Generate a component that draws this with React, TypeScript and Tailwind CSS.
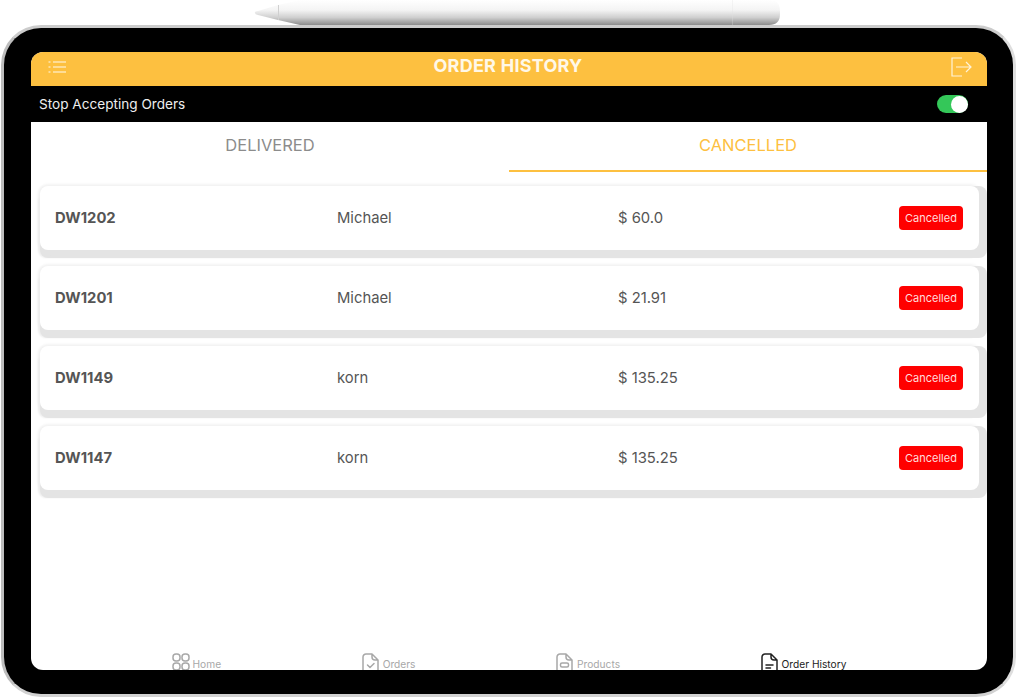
import { FC, ReactNode } from "react";

const orders = [
  { id: "DW1202", name: "Michael", total: "$ 60.0" },
  { id: "DW1201", name: "Michael", total: "$ 21.91" },
  { id: "DW1149", name: "korn", total: "$ 135.25" },
  { id: "DW1147", name: "korn", total: "$ 135.25" },
];

const Pencil: FC = () => (
  <svg width="526" height="25" viewBox="0 0 526 25" className="block ml-[254px]">
    <defs>
      <linearGradient id="pencilBody" x1="0" y1="0" x2="0" y2="1">
        <stop offset="0" stopColor="#ffffff" />
        <stop offset="0.4" stopColor="#f4f4f4" />
        <stop offset="0.7" stopColor="#cfcfcf" />
        <stop offset="1" stopColor="#8c8c8c" />
      </linearGradient>
    </defs>
    <path d="M1 13 Q0 11.5 4 11 L24 5 L46 0 L515 0 Q526 0 526 11 L526 14 Q526 25 515 25 L46 25 L24 20 L4 15 Q1 14.5 1 13 Z" fill="url(#pencilBody)" />
    <path d="M24.5 5 L24.5 20" stroke="#d0d0d0" strokeWidth="1" />
    <path d="M478.5 0 L478.5 25" stroke="#e2e2e2" strokeWidth="1" opacity="0.3" />
  </svg>
);

const TabItem: FC<{ label: string; active?: boolean; children: ReactNode }> = ({ label, active, children }) => (
  <div className={`flex items-start gap-[3px] ${active ? "text-[#222222]" : "text-[#a8a8a8]"}`}>
    <svg width="18" height="22" viewBox="0 0 18 22" fill="none" stroke="currentColor" strokeWidth="1.5" strokeLinecap="round" strokeLinejoin="round">
      {children}
    </svg>
    <span className="text-[10.2px] leading-[12px] mt-[5px]">{label}</span>
  </div>
);

const filePath = "M4 1h6l6 6v11a3 3 0 0 1-3 3H4a3 3 0 0 1-3-3V4a3 3 0 0 1 3-3z M10 1v3a3 3 0 0 0 3 3h3";

export default function App() {
  return (
    <div className="w-[1018px] h-[698px] bg-white overflow-hidden font-['Inter',sans-serif]">
      <Pencil />
      <div className="ml-[1px] w-[1015px] h-[672px] rounded-[40px] border-[3px] border-t-[#cccccc] border-l-[#bdbdbd] border-r-[#dedede] border-b-[#d2d2d2] bg-black pl-[27px] pr-[26px] py-[24px]">
        <div className="flex flex-col h-full bg-white rounded-[12px] overflow-hidden">
          <div className="relative flex items-center justify-between h-[34px] shrink-0 bg-[#fdc040] pl-[17px] pr-[15px]">
            <svg width="18" height="14" viewBox="0 0 18 14" stroke="#fff" strokeWidth="1.2" fill="none" opacity="0.9" className="-mt-[4px]">
              <path d="M0.5 2h2M5 2h13M0.5 7h2M5 7h13M0.5 12h2M5 12h13" />
            </svg>
            <span className="text-[18px] tracking-[0.25px] font-bold text-[#fff8e8] -mt-[7px]">ORDER HISTORY</span>
            <svg width="22" height="20" viewBox="0 0 22 20" stroke="#fff" strokeWidth="1.2" fill="none" opacity="0.8" className="-mt-[4px]">
              <path d="M12 1H2v18h10M6 10h15M16 5l5 5-5 5" />
            </svg>
          </div>

          <div className="flex items-center justify-between h-[36px] shrink-0 bg-black pl-[8px] pr-[19px]">
            <span className="text-[13.6px] text-[#eeeeee]">Stop Accepting Orders</span>
            <div className="flex items-center justify-end w-[31px] h-[18px] rounded-full bg-[#34c759] pr-[0.5px]">
              <div className="w-[17px] h-[17px] rounded-full bg-white" />
            </div>
          </div>

          <div className="flex h-[50px] shrink-0 text-[16.5px]">
            <div className="flex flex-1 items-center justify-center pb-[4px] text-[#8c8c8c]">DELIVERED</div>
            <div className="flex flex-1 items-center justify-center pb-[2px] text-[#fdc040] border-b-2 border-[#fdc040]">CANCELLED</div>
          </div>

          {/* Order rows */}
          <div className="flex-1 pt-[14px] pl-[9px] pr-[8px] flex flex-col gap-[16px]">
            {orders.map((order) => (
              <div
                key={order.id}
                className="grid grid-cols-[282px_281px_1fr_auto] items-center h-[64px] rounded-[8px] bg-white pl-[15px] pr-[16px] text-[14.8px] text-[#555555] shadow-[8px_8px_0_#e4e4e4,8px_0_0_#e4e4e4,0_8px_0_#e4e4e4,-2px_8px_2px_#eeeeee,-2px_0_3px_#f0f0f0,0_-2px_3px_#f4f4f4]"
              >
                <span className="font-bold">{order.id}</span>
                <span>{order.name}</span>
                <span>{order.total}</span>
                <span className="flex items-center justify-center w-[64px] h-[24px] rounded-[4px] bg-[#ff0000] text-[11px] text-[#ffdcdc]">
                  Cancelled
                </span>
              </div>
            ))}
          </div>

          <div className="flex justify-evenly h-[17px] shrink-0">
            <TabItem label="Home">
              <rect x="1" y="1" width="7" height="7" rx="3" />
              <rect x="10" y="1" width="7" height="7" rx="3" />
              <rect x="1" y="10" width="7" height="7" rx="3" />
              <rect x="10" y="10" width="7" height="7" rx="3" />
            </TabItem>
            <TabItem label="Orders">
              <path d={filePath} />
              <path d="M5.5 12l2.5 2.5 4-4" />
            </TabItem>
            <TabItem label="Products">
              <path d={filePath} />
              <rect x="4.5" y="10" width="8" height="4" rx="1.5" />
            </TabItem>
            <TabItem label="Order History" active>
              <path d={filePath} />
              <path d="M5 12h7M5 15h4.5" />
            </TabItem>
          </div>
        </div>
      </div>
    </div>
  );
}
